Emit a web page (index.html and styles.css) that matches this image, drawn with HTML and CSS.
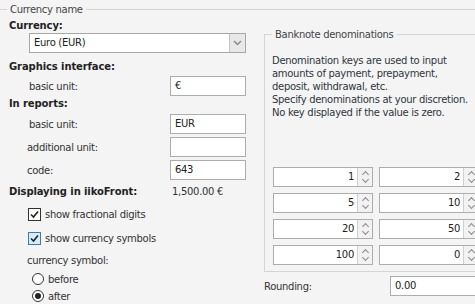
FILE: index.html
```html
<!DOCTYPE html>
<html lang="en">

<head>
    <meta charset="UTF-8">
    <title>Currency</title>
    <link rel="stylesheet" href="styles.css">
</head>

<body>
    <fieldset class="outer">
        <legend>Currency name</legend>
        <div class="cols">
            <div class="left">
                <div class="head first">Currency:</div>
                <div class="combo">
                    <span class="combo-text">Euro (EUR)</span>
                    <span class="combo-btn">
                        <svg width="9" height="6" viewBox="0 0 9 6"><path d="M1 1 L4.5 4.5 L8 1" fill="none" stroke="#8a8a8a" stroke-width="1.5"/></svg>
                    </span>
                </div>
                <div class="head graph">Graphics interface:</div>
                <div class="row r-graph"><span class="lbl">basic unit:</span><span class="field">€</span></div>
                <div class="head reports">In reports:</div>
                <div class="row r-basic"><span class="lbl">basic unit:</span><span class="field">EUR</span></div>
                <div class="row r-add"><span class="lbl narrow">additional unit:</span><span class="field"></span></div>
                <div class="row r-code"><span class="lbl narrow">code:</span><span class="field">643</span></div>
                <div class="show">
                    <span class="head">Displaying in iikoFront:</span>
                    <span class="sample">1,500.00 €</span>
                </div>
                <div class="check c-frac">
                    <span class="box">
                        <svg width="11" height="11" viewBox="0 0 11 11"><path d="M2 5.5 L4.5 8 L9 2.5" fill="none" stroke="#222" stroke-width="1.6"/></svg>
                    </span>
                    show fractional digits
                </div>
                <div class="check c-sym">
                    <span class="box hot">
                        <svg width="11" height="11" viewBox="0 0 11 11"><path d="M2 5.5 L4.5 8 L9 2.5" fill="none" stroke="#222" stroke-width="1.6"/></svg>
                    </span>
                    show currency symbols
                </div>
                <div class="lbl-sym">currency symbol:</div>
                <div class="radio r-before"><span class="dot"></span>before</div>
                <div class="radio r-after"><span class="dot on"></span>after</div>
            </div>

            <div class="right">
                <fieldset class="notes">
                    <legend>Banknote denominations</legend>
                    <p class="desc">
                        Denomination keys are used to input<br>
                        amounts of payment, prepayment,<br>
                        deposit, withdrawal, etc.<br>
                        Specify denominations at your discretion.<br>
                        No key displayed if the value is zero.
                    </p>
                    <div class="denoms">
                        <div class="spin"><span class="num">1</span><span class="arrows"><i class="up"></i><i class="down"></i></span></div>
                        <div class="spin"><span class="num">2</span><span class="arrows"><i class="up"></i><i class="down"></i></span></div>
                        <div class="spin"><span class="num">5</span><span class="arrows"><i class="up"></i><i class="down"></i></span></div>
                        <div class="spin"><span class="num">10</span><span class="arrows"><i class="up"></i><i class="down"></i></span></div>
                        <div class="spin"><span class="num">20</span><span class="arrows"><i class="up"></i><i class="down"></i></span></div>
                        <div class="spin"><span class="num">50</span><span class="arrows"><i class="up"></i><i class="down"></i></span></div>
                        <div class="spin"><span class="num">100</span><span class="arrows"><i class="up"></i><i class="down"></i></span></div>
                        <div class="spin"><span class="num">0</span><span class="arrows"><i class="up"></i><i class="down"></i></span></div>
                    </div>
                </fieldset>
                <div class="rounding">
                    <span class="lbl-round">Rounding:</span>
                    <span class="field wide">0.00</span>
                </div>
            </div>
        </div>
    </fieldset>
</body>

</html>
```

FILE: styles.css
```css
* {
    margin: 0;
    padding: 0;
    box-sizing: border-box;
}
html, body {
    overflow: hidden;
}
body {
    width: 475px;
    height: 304px;
    background-color: #f4f4f4;
    font-family: "DejaVu Sans", "Liberation Sans", sans-serif;
    font-size: 10px;
    line-height: 13px;
    letter-spacing: -0.3px;
    color: #333;
}

/* group boxes */
.outer {
    width: 520px;
    margin: 3px 0 0 -1px;
    padding: 0;
    border: 1px solid #d5d5d5;
}
.outer > legend {
    margin-left: 7px;
    padding: 0 3px;
    color: #444;
}
.cols {
    display: flex;
    height: 300px;
}
.left {
    width: 264px;
    padding-left: 9px;
    display: flex;
    flex-direction: column;
    align-items: flex-start;
}
.right {
    width: 256px;
}

/* left column */
.head {
    font-weight: bold;
    letter-spacing: -0.1px;
    color: #222;
}
.first {
    margin-top: 3px;
}
.combo {
    display: flex;
    width: 217px;
    height: 20px;
    margin: 1px 0 0 20px;
    border: 1px solid #a7a7a7;
    background-color: white;
}
.combo-text {
    flex: 1;
    padding-left: 4px;
    line-height: 18px;
    color: #222;
}
.combo-btn {
    width: 16px;
    display: flex;
    align-items: center;
    justify-content: center;
    border-left: 1px solid #c4c4c4;
    background-color: #e8e8e8;
}
.graph {
    margin-top: 7px;
}
.row {
    display: flex;
    align-items: center;
    width: 237px;
    height: 20px;
}
.lbl {
    flex: 1;
    padding-left: 20px;
}
.lbl.narrow {
    padding-left: 18px;
}
.field {
    width: 76px;
    height: 20px;
    padding-left: 4px;
    line-height: 18px;
    border: 1px solid #adadad;
    background-color: white;
    color: #222;
}
.r-graph {
    margin-top: 3px;
}
.reports {
    margin-top: 1px;
}
.r-basic {
    margin-top: 4px;
}
.r-add, .r-code {
    margin-top: 3px;
}
.show {
    display: flex;
    margin-top: 5px;
}
.show .head {
    width: 163px;
}
.check {
    display: flex;
    align-items: center;
    margin-left: 19px;
    height: 13px;
}
.box {
    width: 13px;
    height: 13px;
    margin-right: 4px;
    border: 1px solid #333;
    background-color: white;
}
.box svg {
    display: block;
}
.box.hot {
    border-color: #3d7bad;
    background-color: #d9ebf9;
}
.c-frac {
    margin-top: 10px;
}
.c-sym {
    margin-top: 11px;
}
.lbl-sym {
    margin: 9px 0 0 18px;
}
.radio {
    display: flex;
    align-items: center;
    margin-left: 23px;
    height: 12px;
}
.dot {
    width: 12px;
    height: 12px;
    margin-right: 4px;
    border: 1px solid #333;
    border-radius: 50%;
    background-color: white;
    display: flex;
    align-items: center;
    justify-content: center;
}
.dot.on::after {
    content: "";
    width: 6px;
    height: 6px;
    border-radius: 50%;
    background-color: #222;
}
.r-before {
    margin-top: 6px;
}
.r-after {
    margin-top: 5px;
}

/* right column */
.notes {
    width: 240px;
    margin-top: 12px;
    padding: 0 7px 6px 7px;
    border: 1px solid #d5d5d5;
}
.notes > legend {
    padding: 0 3px;
    color: #444;
}
.desc {
    margin-top: 13px;
    color: #2f3640;
}
.denoms {
    display: grid;
    grid-template-columns: 100px 100px;
    column-gap: 6px;
    row-gap: 6px;
    margin: 48px 0 0 1px;
}
.spin {
    display: flex;
    height: 20px;
    border: 1px solid #adadad;
    background-color: white;
}
.num {
    flex: 1;
    text-align: right;
    padding-right: 3px;
    line-height: 18px;
    color: #222;
}
.arrows {
    width: 15px;
    border-left: 1px solid #d0d0d0;
    background-color: #f2f2f2;
    display: flex;
    flex-direction: column;
    align-items: center;
    justify-content: center;
    gap: 3px;
}
.arrows i {
    width: 5px;
    height: 5px;
    border-left: 1px solid #8a8a8a;
    border-top: 1px solid #8a8a8a;
}
.arrows .up {
    transform: translateY(1px) rotate(45deg);
}
.arrows .down {
    transform: translateY(-2px) rotate(225deg);
}
.rounding {
    display: flex;
    align-items: center;
    margin-top: 4px;
}
.lbl-round {
    width: 126px;
}
.field.wide {
    width: 100px;
}
```
